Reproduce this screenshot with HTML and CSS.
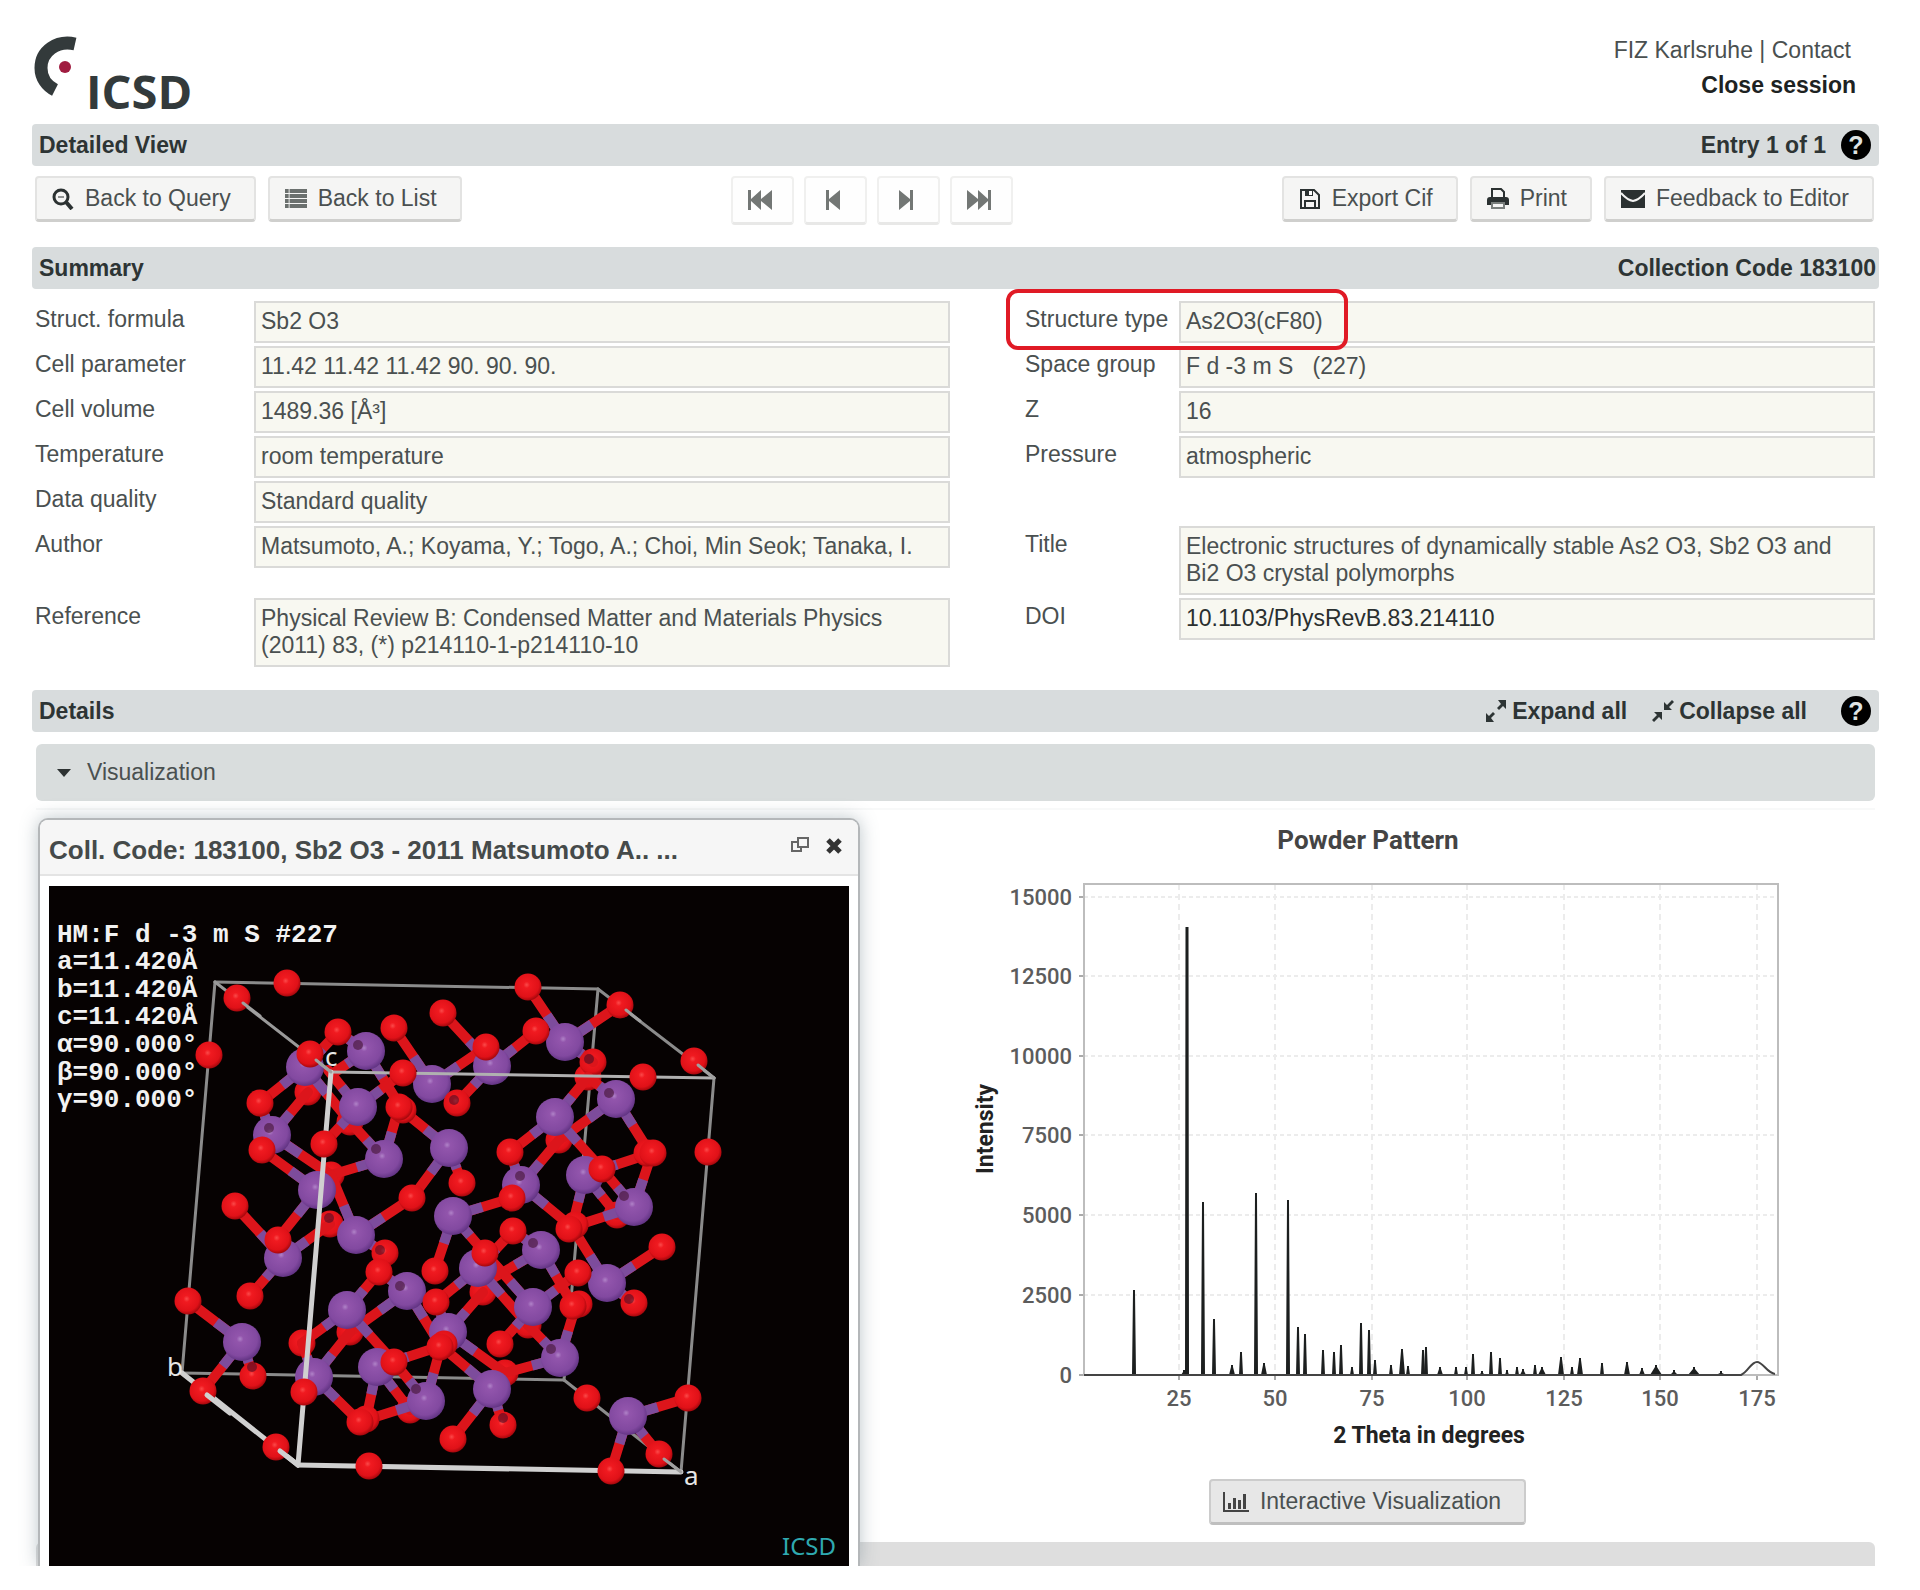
FILE: index.html
```html
<!DOCTYPE html>
<html lang="en">
<head>
<meta charset="utf-8">
<title>ICSD - Detailed View</title>
<link rel="stylesheet" href="styles.css">
</head>
<body>
<div class="page">
  <header class="top">
    <div class="logo">
      <svg viewBox="32 34 50 64" width="50" height="64" aria-hidden="true">
        <path d="M75 44C57 40 41 51 41 68C41 78 47 86 55 90" fill="none" stroke="#333a3b" stroke-width="13"/>
        <circle cx="65" cy="67" r="6" fill="#a01c40"/>
      </svg>
      <span class="logo-text">ICSD</span>
    </div>
    <nav class="top-links">
      <span class="top-line"><a href="#">FIZ Karlsruhe</a> | <a href="#">Contact</a></span>
      <a class="close-session" href="#">Close session</a>
    </nav>
  </header>

  <section class="bar">
    <h1 class="bar-title">Detailed View</h1>
    <span class="bar-title">Entry 1 of 1</span>
    <button class="help" type="button" aria-label="Help">?</button>
  </section>

  <div class="toolbar">
    <div class="group">
      <button class="btn" type="button">
        <svg class="icon" viewBox="0 0 22 22" width="22" height="22"><g fill="none" stroke="currentColor"><circle cx="9" cy="9" r="7" stroke-width="3"/><path d="M14 14l6 7" stroke-width="4"/><path d="M6 9h6" stroke-width="1"/></g></svg>
        Back to Query</button>
      <button class="btn" type="button">
        <svg class="icon" viewBox="0 0 24 22" width="22" height="22" preserveAspectRatio="none"><path d="M0 1h4v4H0zM5 1h19v4H5zM0 6h4v4H0zM5 6h19v4H5zM0 11h4v4H0zM5 11h19v4H5zM0 16h4v4H0zM5 16h19v4H5z" fill="#6b706e"/></svg>
        Back to List</button>
    </div>
    <div class="group group-nav">
      <button class="nav-btn" type="button" aria-label="First entry"><svg viewBox="0 0 24 20" width="24" height="20"><path d="M0 0h3v9L13 0v9L24 0v20L13 11v9L3 11v9H0z" fill="currentColor"/></svg></button>
      <button class="nav-btn" type="button" aria-label="Previous entry"><svg viewBox="0 0 14 20" width="14" height="20"><path d="M0 0h3v9L14 0v20L3 11v9H0z" fill="currentColor"/></svg></button>
      <button class="nav-btn" type="button" aria-label="Next entry"><svg viewBox="0 0 14 20" width="14" height="20"><path d="M14 0h-3v9L0 0v20l11-9v9h3z" fill="currentColor"/></svg></button>
      <button class="nav-btn" type="button" aria-label="Last entry"><svg viewBox="0 0 24 20" width="24" height="20"><path d="M24 0h-3v9L11 0v9L0 0v20l11-9v9l10-9v9h3z" fill="currentColor"/></svg></button>
    </div>
    <div class="group">
      <button class="btn" type="button">
        <svg class="icon" viewBox="0 0 22 22" width="22" height="22"><path d="M2 2h13l5 5v13H2z" fill="none" stroke="currentColor" stroke-width="2"/><path d="M6 2h8v6H6z" fill="currentColor"/><path d="M10 3h3v4h-3z" fill="#fff"/><path d="M6 20v-7h10v7" fill="none" stroke="currentColor" stroke-width="2"/></svg>
        Export Cif</button>
      <button class="btn" type="button">
        <svg class="icon" viewBox="0 0 22 22" width="22" height="22"><path d="M5 10V1h9l3 3v6" fill="none" stroke="currentColor" stroke-width="2"/><path d="M0 17v-5q0-3 3-3h16q3 0 3 3v5h-4v-3H4v3z" fill="currentColor"/><path d="M5 15h12v5H5z" fill="none" stroke="#7a7f7d" stroke-width="2"/></svg>
        Print</button>
      <button class="btn" type="button">
        <svg class="icon" viewBox="0 0 24 22" width="24" height="22"><path d="M0 2h24v18H0z" fill="currentColor"/><path d="M0 5q6 7 12 8q6-1 12-8" fill="none" stroke="#f4f4f3" stroke-width="2"/></svg>
        Feedback to Editor</button>
    </div>
  </div>

  <section class="bar">
    <h2 class="bar-title">Summary</h2>
    <span class="bar-title">Collection Code 183100</span>
  </section>

  <dl class="fields">
    <dt>Struct. formula</dt><dd>Sb2 O3</dd>
    <dt class="second marked">Structure type<span class="mark"></span></dt><dd class="second">As2O3(cF80)</dd>
    <dt>Cell parameter</dt><dd>11.42 11.42 11.42 90. 90. 90.</dd>
    <dt class="second">Space group</dt><dd class="second">F d -3 m S &nbsp;&nbsp;(227)</dd>
    <dt>Cell volume</dt><dd>1489.36 [Å³]</dd>
    <dt class="second">Z</dt><dd class="second">16</dd>
    <dt>Temperature</dt><dd>room temperature</dd>
    <dt class="second">Pressure</dt><dd class="second">atmospheric</dd>
    <dt>Data quality</dt><dd>Standard quality</dd>
    <dt>Author</dt><dd>Matsumoto, A.; Koyama, Y.; Togo, A.; Choi, Min Seok; Tanaka, I.</dd>
    <dt class="second">Title</dt><dd class="second">Electronic structures of dynamically stable As2 O3, Sb2 O3 and Bi2 O3 crystal polymorphs</dd>
    <dt>Reference</dt><dd>Physical Review B: Condensed Matter and Materials Physics (2011) 83, (*) p214110-1-p214110-10</dd>
    <dt class="second">DOI</dt><dd class="second"><a class="doi" href="#">10.1103/PhysRevB.83.214110</a></dd>
  </dl>

  <section class="bar">
    <h2 class="bar-title">Details</h2>
    <a class="bar-link" href="#"><svg viewBox="0 0 22 22" width="22" height="22"><path d="M13 0h8v9l-3-3-4 4-2-2 4-4zM1 22v-9l3 3 4-4 2 2-4 4 3 4z" fill="currentColor"/></svg>Expand all</a>
    <a class="bar-link" href="#"><svg viewBox="0 0 22 22" width="22" height="22"><path d="M12 2v8h8l-3-3 5-5-2-2-5 5zM2 12h8v8l-3-3-5 5-2-2 5-5z" fill="currentColor"/></svg>Collapse all</a>
    <button class="help" type="button" aria-label="Help">?</button>
  </section>

  <div class="accordion">
    <button class="accordion-head" type="button" aria-expanded="true"><svg viewBox="0 0 14 8" width="14" height="8"><path d="M0 0h14L7 8z" fill="#2d3232"/></svg>Visualization</button>
    <div class="panel">
      <article class="viewer">
        <header class="viewer-head">
          <h3 class="viewer-title">Coll. Code: 183100, Sb2 O3 - 2011 Matsumoto A.. ...</h3>
          <button class="tool" type="button" aria-label="Restore"><svg viewBox="0 0 20 18" width="20" height="18"><g fill="none" stroke="#666" stroke-width="2"><path d="M8 1h10v9H8z"/><path d="M8 5H2v9h9v-4"/></g></svg></button>
          <button class="tool" type="button" aria-label="Close"><svg viewBox="0 0 18 18" width="18" height="18"><path d="M3 3l12 12M15 3L3 15" stroke="#333" stroke-width="5"/></svg></button>
        </header>
        <svg class="structure" viewBox="49 886 800 680">
          <defs>
            <radialGradient id="sb" cx="45%" cy="42%" r="60%"><stop offset="0" stop-color="#b083c8"/><stop offset=".15" stop-color="#9255ac"/><stop offset=".75" stop-color="#8249a0"/><stop offset="1" stop-color="#5e3180"/></radialGradient>
            <radialGradient id="ox" cx="45%" cy="42%" r="60%"><stop offset="0" stop-color="#fa4a4a"/><stop offset=".2" stop-color="#f01a20"/><stop offset=".75" stop-color="#e01118"/><stop offset="1" stop-color="#9c060b"/></radialGradient>
          </defs>
          <rect x="49" y="886" width="800" height="680" fill="#060202"/>
          <g id="model"></g>
          <g class="cell-text">
            <text x="57" y="942">HM:F d -3 m S #227</text>
            <text x="57" y="969">a=11.420Å</text>
            <text x="57" y="997">b=11.420Å</text>
            <text x="57" y="1024">c=11.420Å</text>
            <text x="57" y="1052">α=90.000°</text>
            <text x="57" y="1080">β=90.000°</text>
            <text x="57" y="1107">γ=90.000°</text>
          </g>
          <g class="axis-text">
            <text x="167" y="1376">b</text>
            <text x="325" y="1066">c</text>
            <text x="684" y="1485">a</text>
          </g>
          <text class="stamp" x="782" y="1555">ICSD</text>
        </svg>
      </article>

      <div class="powder">
        <svg class="chart" viewBox="952 820 830 640" role="img" aria-label="Powder Pattern">
          <text class="chart-title" x="1367" y="849">Powder Pattern</text>
          <g id="grid"></g>
          <rect x="1083" y="884" width="694" height="491" fill="none" stroke="#bdbdbd" stroke-width="2"/>
          <g id="peaks"></g>
          <text class="axis-title" x="1428" y="1443">2 Theta in degrees</text>
          <text class="axis-title" transform="translate(992 1129) rotate(-90)">Intensity</text>
        </svg>
        <button class="btn btn-chart" type="button">
          <svg class="icon" viewBox="0 0 26 22" width="26" height="22"><path d="M0 1h2v18h24v2H0zM5 12h3v6H5zM10 7h3v11h-3zM15 9h3v9h-3zM20 3h3v15h-3z" fill="#444"/></svg>
          Interactive Visualization</button>
      </div>
      <div class="next-head"></div>
    </div>
  </div>
</div>
<script src="app.js"></script>
</body>
</html>
```
FILE: styles.css
```css
* { box-sizing: border-box; }

body {
  margin: 0;
  background: #fff;
  color: #4a5050;
  font: 23px/27px "Liberation Sans", Arial, sans-serif;
}

a { color: inherit; text-decoration: none; }
button { font: inherit; color: inherit; cursor: pointer; }
h1, h2, h3, dl, dd { margin: 0; }

.page { padding: 0 41px 0 32px; overflow: hidden; }

/* top */
.top {
  display: flex;
  justify-content: space-between;
  align-items: flex-start;
  height: 124px;
  padding-top: 33px;
}
.logo { display: flex; align-items: flex-start; gap: 4px; padding-top: 1px; }
.logo-text {
  padding-top: 25px;
  font: 700 47px/64px "Open Sans", sans-serif;
  color: #333a3b;
}
.top-links {
  display: flex;
  flex-direction: column;
  align-items: flex-end;
  padding-right: 23px;
  line-height: 35px;
}
.top-line { padding-right: 5px; }
.close-session { font-weight: 700; color: #1d2222; }

/* section bars */
.bar {
  display: flex;
  align-items: center;
  gap: 15px;
  height: 42px;
  padding: 0 3px 0 7px;
  border-radius: 4px;
  background: #d8dcdd;
  color: #2d3434;
}
.bar-title { font-size: 23px; font-weight: 700; }
.bar-title:first-child { margin-right: auto; }
.bar-link { display: flex; align-items: center; gap: 5px; font-weight: 700; margin-right: 10px; }
.bar-link + .help { margin-left: 9px; }
.help {
  width: 30px;
  height: 30px;
  margin-right: 5px;
  padding: 0;
  border: 0;
  border-radius: 50%;
  background: #000;
  color: #dfe3e3;
  font-size: 25px;
  font-weight: 700;
  line-height: 30px;
}

/* toolbar */
.toolbar {
  display: flex;
  justify-content: space-between;
  align-items: flex-start;
  padding: 10px 5px 22px 3px;
}
.group { display: flex; gap: 12px; }
.group-nav { gap: 10px; }
.btn {
  display: flex;
  align-items: center;
  gap: 11px;
  height: 46px;
  padding: 0 23px 0 15px;
  border: 2px solid #e3e3e2;
  border-bottom: 3px solid #cfcfcd;
  border-radius: 4px;
  background: #f5f5f4;
}
.icon { color: #2b3131; }
.nav-btn {
  display: flex;
  align-items: center;
  justify-content: center;
  width: 63px;
  height: 49px;
  padding: 0 4px 0 0;
  border: 2px solid #f0f0ef;
  border-bottom: 3px solid #e8e8e7;
  border-radius: 4px;
  background: #fefefe;
  color: #737775;
}

/* summary */
.fields {
  display: grid;
  grid-template-columns: 219px 1fr 75px 154px 1fr;
  row-gap: 3px;
  align-items: start;
  padding: 12px 4px 23px 3px;
}
.fields dt { grid-column: 1; padding-top: 5px; }
.fields dd {
  grid-column: 2;
  padding: 5px 2px 6px 5px;
  border: 2px solid #dadad8;
  background: #f8f8f1;
}
.fields dt.second { grid-column: 4; }
.fields dd.second { grid-column: 5; }
.marked { position: relative; }
.mark {
  position: absolute;
  z-index: 1;
  left: -19px;
  top: -12px;
  width: 342px;
  height: 61px;
  border: 4px solid #e01a25;
  border-radius: 12px;
}
.doi { color: #2a2f2f; }

/* details */
.accordion { padding: 12px 4px 24px; }
.accordion-head {
  display: flex;
  align-items: center;
  gap: 16px;
  width: 100%;
  height: 57px;
  padding: 0 21px;
  border: 0;
  border-radius: 6px;
  background: #d9dddd;
}
.panel {
  display: grid;
  grid-template-columns: 824px 1fr;
  grid-template-rows: auto 24px;
  margin-top: 7px;
  padding-top: 8px;
  border-top: 2px solid #f8f9f9;
}
.viewer {
  z-index: 1;
  grid-area: 1 / 1 / 3 / 2;
  margin-left: 2px;
  border: 2px solid #b4b7b9;
  border-bottom: 0;
  border-radius: 10px 10px 0 0;
  background: #fff;
  box-shadow: 0 0 18px rgba(110, 130, 140, .45);
  clip-path: inset(-20px -24px 0 -20px);
}
.viewer-head {
  display: flex;
  align-items: flex-start;
  gap: 15px;
  height: 56px;
  padding: 17px 15px 0 9px;
  border-bottom: 2px solid #e4e4e4;
  border-radius: 8px 8px 0 0;
  background: #f6f6f6;
}
.viewer-title { flex: 1; font-size: 26px; white-space: nowrap; color: #454a4a; }
.tool { display: flex; padding: 0; border: 0; background: none; }
.structure { display: block; margin: 10px 9px 0; }
.cell-text { font: 700 26px "Liberation Mono", monospace; fill: #f2f2f2; white-space: pre; }
.axis-text { font: 26px "Noto Sans", sans-serif; fill: #e6e6e6; }
.stamp { font: 24px "Noto Sans", sans-serif; fill: #2fa9b0; }

.powder {
  grid-area: 1 / 2;
  display: flex;
  flex-direction: column;
  align-items: center;
  padding: 2px 0 17px;
}
.chart { width: 830px; max-width: 100%; font-family: Roboto, sans-serif; text-anchor: middle; }
.chart-title { font-size: 26px; font-weight: 700; fill: #444; }
.axis-title { font-size: 23px; font-weight: 700; fill: #222; }
.tick { font-size: 22px; font-weight: 500; fill: #5c5c5c; }
.tick-y { text-anchor: end; }
.btn-chart {
  margin-top: 19px;
  padding: 0 23px 0 12px;
  border: 2px solid #cccccc;
  border-bottom: 3px solid #bfbfbf;
  background: #e7e7e7;
}
.next-head {
  grid-area: 2 / 1 / 3 / 3;
  border-radius: 6px 6px 0 0;
  background: #dedede;
}
```
FILE: app.js
```javascript
const NS = "http://www.w3.org/2000/svg";

function add(parent, name, attrs, text) {
  const el = document.createElementNS(NS, name);
  for (const key in attrs) el.setAttribute(key, attrs[key]);
  if (text !== undefined) el.textContent = text;
  parent.appendChild(el);
}

/* ---------- crystal structure ---------- */
const model = document.getElementById("model");

// Antimony atom followed by the oxygen ends of its bonds.
const antimony = [
  [366,1051, [338,1032],[332,1074],[400,1106]],
  [305,1067, [260,1103],[350,1122],[338,1032]],
  [272,1135, [260,1103],[308,1092],[331,1175]],
  [384,1159, [399,1107],[331,1175],[350,1122]],
  [358,1107, [403,1073],[324,1144],[328,1070]],
  [317,1190, [262,1150],[277,1240]],
  [449,1148, [402,1110],[412,1198],[462,1183]],
  [492,1066, [443,1013],[536,1031],[457,1103]],
  [432,1084, [394,1028],[486,1047],[403,1073]],
  [565,1042, [528,987],[620,1005],[593,1062]],
  [616,1099, [588,1077],[559,1140],[650,1153]],
  [555,1117, [588,1077],[510,1152],[602,1169]],
  [521,1185, [510,1152],[559,1140],[572,1227]],
  [585,1175, [572,1227],[617,1215],[652,1153]],
  [634,1207, [652,1153],[602,1169],[572,1227]],
  [453,1216, [512,1198],[435,1270],[485,1253]],
  [541,1250, [513,1231],[490,1280],[570,1300]],
  [478,1268, [436,1302],[513,1231],[528,1325]],
  [448,1332, [436,1302],[483,1292],[505,1373]],
  [607,1283, [572,1227],[662,1247],[634,1303]],
  [283,1258, [235,1206],[330,1224],[250,1296]],
  [356,1235, [331,1175],[412,1198],[385,1253]],
  [242,1342, [188,1301],[203,1391],[253,1376]],
  [407,1291, [379,1272],[350,1332],[441,1346]],
  [347,1310, [379,1272],[302,1343],[394,1362]],
  [314,1377, [302,1343],[350,1332],[360,1422]],
  [377,1367, [441,1346],[366,1420],[410,1410]],
  [426,1401, [441,1346],[366,1420],[394,1362]],
  [560,1358, [576,1305],[505,1373],[528,1325]],
  [533,1307, [485,1253],[578,1273],[500,1344]],
  [492,1389, [441,1346],[453,1439],[503,1425]],
  [628,1416, [688,1398],[611,1471],[659,1454]]
];

const oxygenBack = [
  [308,1092],[350,1122],[331,1175],[559,1140],[617,1215],[350,1332],[483,1292],
  [410,1410],[505,1373],[528,1325],[330,1224],[302,1343],[588,1077],[593,1062]
];

const oxygenFront = [
  [287,983],[237,998],[209,1055],[338,1032],[394,1028],[443,1013],[310,1054],[403,1073],
  [260,1103],[403,1110],[399,1107],[457,1103],[262,1150],[324,1144],[235,1206],[412,1198],
  [462,1183],[278,1240],[528,987],[486,1047],[536,1031],[620,1005],[694,1061],[643,1077],
  [708,1152],[510,1152],[647,1153],[653,1153],[602,1169],[512,1198],[575,1225],[569,1229],
  [513,1231],[485,1253],[662,1247],[435,1271],[578,1273],[250,1296],[188,1301],[385,1253],
  [379,1272],[436,1302],[253,1376],[203,1391],[304,1392],[394,1362],[444,1344],[440,1347],
  [500,1344],[366,1419],[360,1422],[276,1447],[369,1466],[453,1439],[503,1425],[579,1304],
  [573,1306],[634,1303],[587,1398],[688,1398],[659,1454],[611,1471]
];

function line(x1, y1, x2, y2, stroke, width) {
  add(model, "line", { x1, y1, x2, y2, stroke, "stroke-width": width, "stroke-linecap": "round" });
}
function atom([cx, cy], kind) {
  add(model, "circle", { cx, cy, r: kind === "sb" ? 19 : 13.5, fill: `url(#${kind})` });
}

[[215,982,598,989],[598,989,564,1380],[182,1373,564,1380],[215,982,182,1373],
 [564,1380,681,1472],[598,989,714,1078],[714,1078,681,1472]]
  .forEach(e => line(...e, "#8b8b8b", 3));

oxygenBack.forEach(p => atom(p, "ox"));
antimony.forEach(([x, y, ...ends]) => ends.forEach(([ex, ey]) => {
  line(x, y, ex, ey, "#dc151b", 10);
  const len = Math.hypot(ex - x, ey - y);
  const part = Math.min(0.9, (len * 0.35 + 9) / len);
  add(model, "line", { x1: x, y1: y, x2: x + (ex - x) * part, y2: y + (ey - y) * part, stroke: "#7d4c9c", "stroke-width": 10 });
}));
antimony.forEach(a => atom(a, "sb"));

line(215, 982, 331, 1072, "#999", 3);
line(331, 1072, 714, 1078, "#b0b0b0", 3);
line(331, 1072, 298, 1465, "#d0d0d0", 5);
line(182, 1373, 298, 1465, "#d0d0d0", 5);
line(298, 1465, 681, 1472, "#d0d0d0", 5);

oxygenFront.forEach(p => atom(p, "ox"));

[[207,1395,230,1413],[280,1451,298,1465]].forEach(e => line(...e, "#d0d0d0", 5));
[[243,1003,260,1016],[316,1060,331,1072],[626,1010,640,1021],[698,1065,714,1078],[664,1459,681,1472]]
  .forEach(e => line(...e, "#a0a0a0", 3));
[[589,1059],[454,1100],[329,1218],[380,1250],[503,1418],[252,1367],[629,1299],[376,1149],[416,1389],
 [551,1349],[624,1196],[609,1093],[533,1243],[400,1286],[358,1045],[269,1128],[520,1176]]
  .forEach(([cx, cy]) => add(model, "circle", { cx, cy, r: 5, fill: "#3c0c26", opacity: 0.55 }));

/* ---------- powder pattern ---------- */
const grid = document.getElementById("grid");
const peaks = document.getElementById("peaks");
const base = 1375;

[[25,1178],[50,1274],[75,1371],[100,1466],[125,1563],[150,1659],[175,1756]].forEach(([v, x]) => {
  add(grid, "path", { d: `M${x} 884V${base}`, stroke: "#ececec", "stroke-width": 2, "stroke-dasharray": "6 4" });
  add(grid, "path", { d: `M${x} ${base}v5`, stroke: "#aaa", "stroke-width": 2 });
  add(grid, "text", { x, y: 1406, class: "tick" }, v);
});
[[15000,897],[12500,976],[10000,1056],[7500,1135],[5000,1215],[2500,1295],[0,1375]].forEach(([v, y]) => {
  if (v) add(grid, "path", { d: `M1083 ${y}H1777`, stroke: "#ececec", "stroke-width": 2, "stroke-dasharray": "4 3" });
  add(grid, "path", { d: `M1078 ${y}h5`, stroke: "#aaa", "stroke-width": 2 });
  add(grid, "text", { x: 1071, y: y + 8, class: "tick tick-y" }, v);
});

// Reflection position, top of the peak, half width at the base.
[[1133,1290,2],[1183,1370,3],[1186,927,2],[1202,1202,2],[1213,1319,2],[1231,1365,3],[1240,1352,2],[1255,1193,2],
 [1263,1363,3],[1287,1200,2],[1297,1327,2],[1304,1334,2],[1322,1350,2],[1333,1352,2],[1340,1345,2],[1351,1367,2],
 [1360,1323,2],[1368,1330,2],[1374,1360,2],[1390,1365,2],[1401,1349,3],[1407,1366,2],[1422,1350,2],[1425,1347,2],
 [1439,1367,3],[1455,1367,2],[1465,1367,2],[1472,1354,2],[1481,1371,3],[1490,1352,2],[1499,1358,2],[1506,1370,2],
 [1516,1367,2],[1522,1369,3],[1534,1365,2],[1541,1367,4],[1560,1357,3],[1571,1367,2],[1579,1358,3],[1601,1363,2],
 [1626,1362,3],[1641,1368,3],[1655,1365,6],[1673,1370,4],[1693,1367,6],[1720,1371,5]].forEach(([x, y, w]) =>
  add(peaks, "path", { d: `M${x - w} ${base}L${x - 1} ${y + 2}V${y}H${x + 1}V${y + 2}L${x + w} ${base}z`, fill: "#1c1f1f" }));
add(peaks, "path", { d: "M1186 927V1375", stroke: "#1c1f1f", "stroke-width": 3 });
add(peaks, "path", { d: "M1083 1375H1740C1747 1372 1750 1362 1756 1362S1766 1373 1774 1374", fill: "none", stroke: "#444", "stroke-width": 2 });
```
